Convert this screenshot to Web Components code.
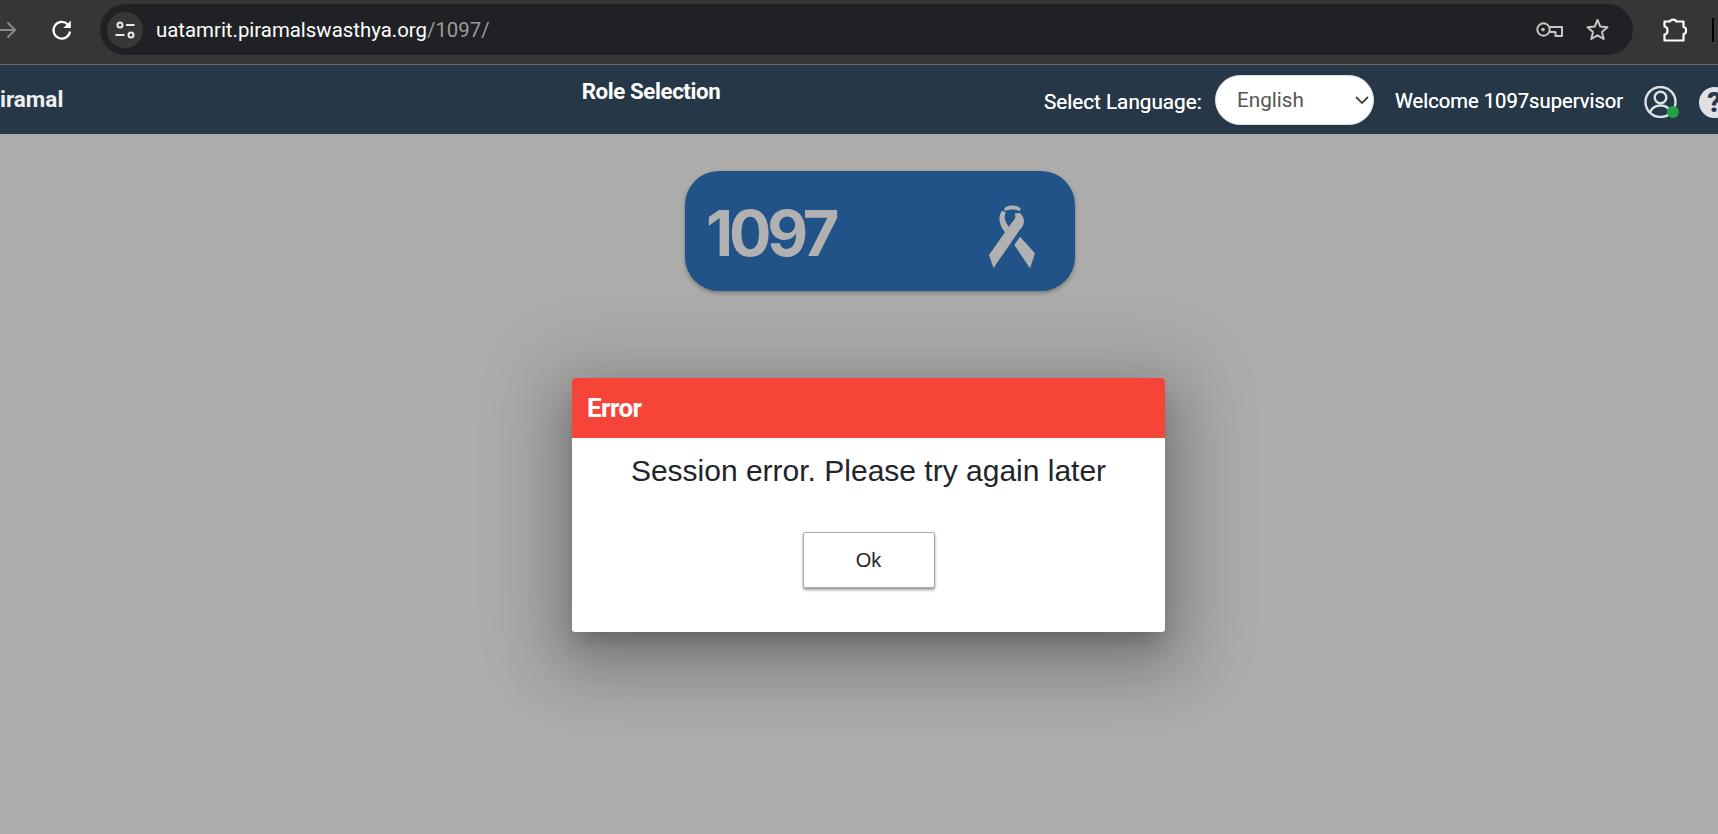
<!DOCTYPE html>
<html lang="en"><head><meta charset="utf-8"><title>Role Selection</title>
<style>
html,body{margin:0;height:100%;overflow:hidden;background:#acacaa;font-family:Roboto,"Liberation Sans",sans-serif}
body{display:flex;flex-direction:column;height:834px;width:1718px;position:relative}
</style></head><body>
<browser-bar></browser-bar>
<app-header title-text="Role Selection" user="1097supervisor"></app-header>
<main-area><service-card label="1097"></service-card></main-area>
<error-dialog heading="Error" message="Session error. Please try again later" action="Ok"></error-dialog>
<script>
function def(name,html){customElements.define(name,class extends HTMLElement{connectedCallback(){if(this.shadowRoot)return;const r=this.attachShadow({mode:'open'});r.innerHTML=html(this);}});}
def('browser-bar',()=>`<style>
:host{display:flex;align-items:center;height:65px;box-sizing:border-box;background:#363636;border-bottom:1px solid #6b6b6b;flex:none;padding:4px 0 9px;overflow:hidden;position:relative}
.fwd{margin-left:-6px;width:24px;height:24px;flex:none}
.rel{margin-left:31.500px;width:24px;height:24px;flex:none}
.omni{margin-left:26.500px;width:1533px;height:51px;flex:none;border-radius:26px;background:#202124;display:flex;align-items:center;box-sizing:border-box;padding-left:7px}
.site{width:36px;height:36px;border-radius:50%;background:#363739;display:flex;align-items:center;justify-content:center;flex:none}
.url{margin-left:13px;font:20.400px Roboto,sans-serif;color:#fff;white-space:nowrap}
.url span{color:#9a9b9d}
.sp{flex:1}
.key{width:27px;height:15px;flex:none}
.star{margin-left:23px;width:23px;height:23px;flex:none;margin-right:24px}
.ext{margin-left:29.500px;width:24px;height:24px;flex:none}
.bar{margin-left:25.500px;width:2px;height:24px;background:#000;flex:none}
</style>
<svg class="fwd" viewBox="0 0 24 24" fill="none" stroke="#8a8a8a" stroke-width="2"><path d="M2 12h19M13.500 4.500l7.500 7.500-7.500 7.500"/></svg>
<svg class="rel" viewBox="0 0 24 24" fill="none" stroke="#fff" stroke-width="2.200"><path d="M20 13.500A8.300 8.300 0 1 1 17.800 6.500"/><path d="M20.800 2.500v7.500h-7.500z" fill="#fff" stroke="none"/></svg>
<div class="omni">
<div class="site"><svg width="22" height="20" viewBox="0 0 22 20" fill="none" stroke="#e8eaed" stroke-width="2"><circle cx="6" cy="5" r="2.500"/><path d="M12 5h8.500M1.500 15h9"/><circle cx="17" cy="15" r="2.500"/></svg></div>
<div class="url">uatamrit.piramalswasthya.org<span>/1097/</span></div>
<div class="sp"></div>
<svg class="key" viewBox="0 0 27 15" fill="none" stroke="#c4c7c5" stroke-width="2" stroke-linejoin="round"><circle cx="7.500" cy="7.500" r="6.200"/><circle cx="7" cy="7.500" r="1.800" fill="#c4c7c5" stroke="none"/><path d="M13.500 5h12.500v9h-6.500v-4h-6"/></svg>
<svg class="star" viewBox="0 0 23 23" fill="none" stroke="#c4c7c5" stroke-width="2" stroke-linejoin="round"><path d="M11.500 2l2.800 6.600 7.200.6-5.500 4.800 1.700 7L11.500 17.300 5.300 21l1.700-7L1.500 9.200l7.200-.6z"/></svg>
</div>
<svg class="ext" viewBox="0 0 24 24" fill="none" stroke="#fff" stroke-width="2.200" stroke-linejoin="round"><path d="M1.500 3.500H7C7 1 13 1 13 3.500H20.500V9C24 9 24 16 20.500 16V22.500H1.500V16.500C5.500 16 5.500 9 1.500 8.500Z"/></svg>
<div class="bar"></div>`);
def('user-avatar',()=>`<style>:host{display:block;width:34px;height:32px;position:relative}
i{position:absolute;left:23px;top:20px;width:12px;height:12px;border-radius:50%;background:#25a244}
svg{display:block}</style>
<svg width="33" height="32" viewBox="0 0 33 32" fill="none" stroke="#dfe2e5" stroke-width="2.400"><circle cx="16.500" cy="16" r="15"/><circle cx="16.500" cy="11.500" r="5.800"/><path d="M6 26c2.500-5 6.500-6.500 10.500-6.500S24.500 21 27 26"/></svg><i></i>`);
def('app-header',(h)=>`<style>
:host{display:flex;align-items:center;height:69px;background:#263747;color:#fff;flex:none;overflow:hidden;position:relative;font-family:Roboto,"Liberation Sans",sans-serif}
.logo{width:64px;font-size:22.500px;font-weight:700;color:#eef0f2;white-space:nowrap;flex:none;margin-top:-2px}
.title{margin-left:510.500px;width:153px;flex:none;font-size:22.300px;font-weight:700;text-align:center;white-space:nowrap;margin-top:-17px;letter-spacing:-.4px}
.lang{margin-left:316.500px;font-size:20.700px;font-weight:400;white-space:nowrap;flex:none;width:171px;text-shadow:0 0 .4px #fff;margin-top:4px}
select{appearance:none;width:159px;height:50px;border:1px solid #ddd;border-radius:25px;background:#fff;color:#555;font:20.700px Roboto,sans-serif;padding:0 0 0 21px;box-sizing:border-box;flex:none;margin:0;outline:none;display:block}
.selwrap{position:relative;flex:none;height:50px;margin-top:1px}
.selwrap svg{position:absolute;right:5px;top:21px}
.welcome{margin-left:21px;font-size:20.200px;font-weight:400;white-space:nowrap;flex:none;width:249px;margin-top:3px;text-shadow:0 0 .4px #fff}
user-avatar{flex:none;margin-top:5px}
.help{margin-left:21px;flex:none;width:31px;height:31px;border-radius:50%;background:#dfe2e5;color:#263747;font-size:28px;font-weight:900;line-height:31px;text-align:center;margin-top:5px}
</style>
<div class="logo">iramal</div>
<div class="title">${h.getAttribute('title-text')}</div>
<div class="lang">Select Language:</div>
<div class="selwrap"><select><option>English</option></select><svg width="14" height="9" viewBox="0 0 14 9" fill="none" stroke="#444" stroke-width="1.800"><path d="M1 1l6 6 6-6"/></svg></div>
<div class="welcome">Welcome ${h.getAttribute('user')}</div>
<user-avatar></user-avatar>
<div class="help">?</div>`);
def('main-area',()=>`<style>:host{display:flex;flex-direction:column;flex:1;padding:37px 0 0 685px;background:#acacaa}</style><slot></slot>`);
def('service-card',(h)=>`<style>
:host{display:flex;align-items:center;justify-content:space-between;width:390px;height:120px;box-sizing:border-box;background:#225388;border-radius:34px;padding:0 40px 0 21px;color:#b1b1b1;box-shadow:0 2px 4px rgba(0,0,0,.3)}
.n{font:700 63px Inter,sans-serif;letter-spacing:-4.200px;margin-top:3px}
svg{flex:none;margin-top:10px}
</style><div class="n">${h.getAttribute('label')}</div>
<svg width="46" height="64" viewBox="0 0 46 64" fill="#b1b1b1"><path d="M25.300 41L31 32.700L46 49.300L41 64.300Z"/><path d="M13 6.500C9 12 9.500 20 16 28.500L20 23C15.500 17 14.500 12.500 17 8.500Z"/><path d="M31 9C36.500 14 36 21 31 25.500L4.500 64L0 51L22.500 19C27 14.500 27 12 25.500 9.500Z"/><path d="M15 5C17 .8 29 0 32 5L30.500 7C27 5 20 5 16.500 7Z"/></svg>`);
def('error-dialog',(h)=>`<style>
:host{position:absolute;left:572px;top:378px;width:593px;height:254px;background:#fff;border-radius:3px;overflow:visible;display:flex;flex-direction:column;box-shadow:0 14px 20px -6px rgba(0,0,0,.22),0 24px 60px 14px rgba(0,0,0,.2),0 10px 80px 30px rgba(0,0,0,.09);color:#212529}
.h{height:60px;background:#f74438;color:#fff;border-radius:3px 3px 0 0;display:flex;align-items:center;padding-left:15px;font:700 26px Roboto,sans-serif;letter-spacing:-.6px;flex:none}
.m{text-align:center;font:30px "Liberation Sans",sans-serif;margin-top:17px;line-height:32px}
.a{display:flex;justify-content:center;margin-top:45px}
button{width:132px;height:56px;background:#fff;border:1px solid #aaa;border-radius:2px;font:20px "Liberation Sans",sans-serif;color:#212529;box-shadow:0 2px 3px rgba(0,0,0,.4);padding:0}
</style><div class="h">${h.getAttribute('heading')}</div>
<div class="m">${h.getAttribute('message')}</div>
<div class="a"><button>${h.getAttribute('action')}</button></div>`);
</script></body></html>
